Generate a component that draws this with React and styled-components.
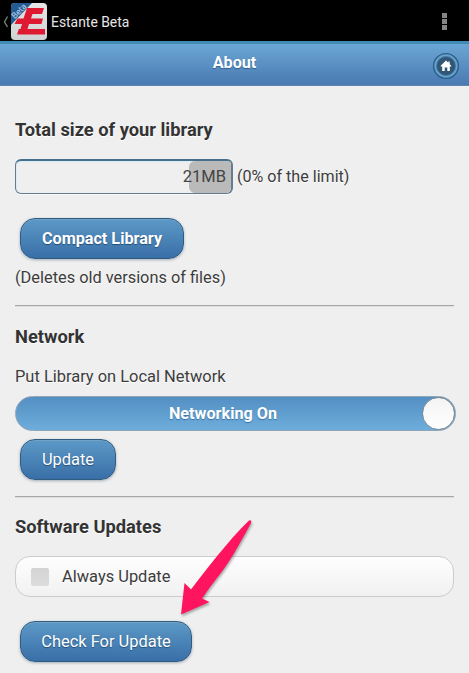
import React from "react";
import styled, { createGlobalStyle } from "styled-components";

const GlobalStyle = createGlobalStyle`
  * { box-sizing: border-box; }
  html, body { margin: 0; padding: 0; background: #efefef; overflow: hidden; }
  body { font-family: Roboto, "Liberation Sans", sans-serif; color: #3c3c3c; }
`;

const Screen = styled.div`
  position: relative;
  width: 469px;
  height: 673px;
  overflow: hidden;
  background: #efefef;
`;

const ActionBar = styled.header`
  display: flex;
  align-items: center;
  height: 41px;
  padding: 0 22px 0 3px;
  background: #000;
`;

const AppTitle = styled.span`
  flex: 1;
  margin-left: 4px;
  padding-top: 3px;
  color: #e6e6e6;
  font-size: 13.9px;
  line-height: 20px;
`;

const Overflow = styled.div`
  display: grid;
  gap: 1px;
  padding-top: 2px;
`;

const Dot = styled.i`
  width: 5px;
  height: 5px;
  background: #858585;
`;

const PageHeader = styled.div`
  display: grid;
  grid-template-columns: 1fr auto 1fr;
  align-items: center;
  height: 45px;
  padding: 3px 9px 0;
  border-top: 3px solid #408cb7;
  border-bottom: 1px solid #5c84ac;
  background: linear-gradient(#6aa7d5, #4a79b1);
`;

const PageTitle = styled.h1`
  grid-column: 2;
  margin: 0;
  padding-bottom: 6px;
  color: #fff;
  font-size: 16.2px;
  font-weight: 700;
  line-height: 20px;
  text-shadow: 0 1px 1px #2e5f8e;
`;

const HomeButton = styled.button`
  justify-self: end;
  display: block;
  width: 28px;
  height: 28px;
  padding: 0;
  border: 0;
  background: none;
`;

const Content = styled.main`
  display: flex;
  flex-direction: column;
  padding: 33px 15px 0 15px;
`;

const SectionTitle = styled.h2`
  margin: 0;
  color: #333;
  font-size: 18.3px;
  font-weight: 700;
  line-height: 22px;
  text-shadow: 0 1px 0 #fff;
`;

const Text = styled.span`
  margin-top: ${(p) => p.$top || "0"};
  font-size: ${(p) => p.$size || "16.45px"};
  line-height: 20px;
  text-shadow: 0 1px 0 #fff;
`;

const UsageRow = styled.div`
  display: flex;
  align-items: center;
  gap: 4px;
  height: 35px;
  margin: 18px 0 24px;
`;

const Meter = styled.div`
  display: flex;
  justify-content: flex-end;
  width: 218px;
  height: 35px;
  overflow: hidden;
  border: 1px solid #667b90;
  border-top: 2px solid #45718f;
  border-right-width: 2px;
  border-radius: 6px;
  background: #efefef;
  box-shadow: inset 1px 1px 1px #d9ebf7, 0 1px 0 #f8f8f8;
`;

const MeterFill = styled.span`
  display: flex;
  justify-content: flex-end;
  width: 42px;
  border-radius: 6px 4px 4px 6px;
  background: #bababa;
`;

const MeterValue = styled.span`
  flex: none;
  padding-right: 5px;
  color: #444;
  font-size: 16.5px;
  line-height: 31px;
`;

const Button = styled.button`
  align-self: flex-start;
  width: ${(p) => p.$width};
  height: 41px;
  margin-left: 5px;
  padding: 0 0 1px;
  border: 1px solid #315c82;
  border-radius: 15px;
  background: linear-gradient(#5c99c7, #396fa7);
  box-shadow: 0 1px 3px rgba(45, 75, 105, 0.4), inset 0 1px 0 #72a3c6;
  color: #fff;
  font-family: inherit;
  font-size: ${(p) => (p.$strong ? "16.2px" : "16.45px")};
  font-weight: ${(p) => (p.$strong ? 700 : 400)};
  text-shadow: 0 1px 1px #244e78;
  white-space: nowrap;
`;

const Divider = styled.hr`
  width: 100%;
  height: 2px;
  margin: ${(p) => p.$margin};
  border: 0;
  border-top: 1px solid #a7a7a7;
  border-bottom: 1px solid #dedede;
`;

const Switch = styled.div`
  display: flex;
  align-items: center;
  width: 441px;
  height: 35px;
  margin: 9px 0 8px;
  border: 1px solid #91a6b5;
  border-radius: 18px;
  background: linear-gradient(#548fc3, #6daddb);
`;

const SwitchLabel = styled.span`
  flex: 1;
  padding: 0 0 1px 8px;
  color: #fff;
  font-size: 16.2px;
  font-weight: 700;
  text-align: center;
  text-shadow: 0 1px 1px #3c719f;
`;

const Thumb = styled.span`
  width: 33px;
  height: 33px;
  border: 1px solid #7c8b95;
  border-radius: 50%;
  background: linear-gradient(#f4f4f4, #fff);
`;

const CheckRow = styled.label`
  display: flex;
  align-items: center;
  gap: 13px;
  height: 41px;
  margin: 18px 0 24px;
  padding-left: 15px;
  border: 1px solid #cccccc;
  border-radius: 15px;
  background: linear-gradient(#fefefe, #f1f1f1);
`;

const Box = styled.span`
  width: 18px;
  height: 18px;
  border-radius: 2px;
  background: linear-gradient(#d3d3d3, #dcdcdc);
`;

const Pointer = styled.svg`
  position: absolute;
  top: 515px;
  left: 175px;
  filter: drop-shadow(1px 2px 1px rgba(60, 60, 60, 0.4));
  pointer-events: none;
`;

const BadgeText = styled.text`
  font: 8.5px Roboto, sans-serif;
  fill: #c2dcf2;
`;

function Logo() {
  return (
    <svg width="44" height="41" viewBox="0 0 44 41">
      <defs>
        <linearGradient id="tile" x2="0" y2="1">
          <stop stopColor="#e6e6e6" />
          <stop offset="1" stopColor="#cfd2d4" />
        </linearGradient>
        <clipPath id="tileClip"><rect x="8" y="3" width="36" height="37" rx="4" /></clipPath>
      </defs>
      <path d="M4.5 16.5 1.5 22 4.5 27" fill="none" stroke="#72846f" strokeWidth="1.4" />
      <g clipPath="url(#tileClip)">
        <rect x="8" y="3" width="36" height="37" fill="url(#tile)" />
        <path d="M24 8H41L39 14H29.5L28 18.5H40L38.5 24H26L24.5 29H42V34.5H14L15.8 29H17.5L19 24H11.5L14.5 18.5H20.5Z" fill="#df1931" />
        <path d="M8 3H29L8 25Z" fill="#245b91" />
        <BadgeText x="12" y="19.2" transform="rotate(-46 12 19.2)">Beta</BadgeText>
      </g>
    </svg>
  );
}

function HomeIcon() {
  return (
    <svg width="28" height="28" viewBox="0 0 28 28">
      <circle cx="14" cy="14" r="12.4" fill="#69a1cb" stroke="#285f8b" strokeWidth="1.4" />
      <circle cx="14" cy="14" r="9.5" fill="#315675" stroke="#447da7" />
      <path d="M14 8.6 8.7 13.8V14.5H10.2V19H12.7V15.5H15.3V19H17.8V14.5H19.3V13.8L17.7 12.2V9.6H16.3V10.8Z" fill="#fff" />
    </svg>
  );
}

export default function App() {
  return (
    <>
      <GlobalStyle />
      <Screen>
        <ActionBar>
          <Logo />
          <AppTitle>Estante Beta</AppTitle>
          <Overflow><Dot /><Dot /><Dot /></Overflow>
        </ActionBar>
        <PageHeader>
          <PageTitle>About</PageTitle>
          <HomeButton aria-label="Home"><HomeIcon /></HomeButton>
        </PageHeader>
        <Content>
          <SectionTitle>Total size of your library</SectionTitle>
          <UsageRow>
            <Meter><MeterFill><MeterValue>21MB</MeterValue></MeterFill></Meter>
            <Text $size="16.1px">(0% of the limit)</Text>
          </UsageRow>
          <Button $strong $width="164px">Compact Library</Button>
          <Text $top="9px" $size="16.35px">(Deletes old versions of files)</Text>
          <Divider $margin="17px 0 19px" />
          <SectionTitle>Network</SectionTitle>
          <Text $top="19px">Put Library on Local Network</Text>
          <Switch role="switch" aria-checked="true">
            <SwitchLabel>Networking On</SwitchLabel>
            <Thumb />
          </Switch>
          <Button $width="96px">Update</Button>
          <Divider $margin="16px 0 18px" />
          <SectionTitle>Software Updates</SectionTitle>
          <CheckRow><Box /><Text>Always Update</Text></CheckRow>
          <Button $width="172px">Check For Update</Button>
        </Content>
        <Pointer width="85" height="105" viewBox="0 0 85 105">
          <path d="M74 5.5Q77 4.5 76 8C64 30 53 50 42 63Q34 73 27 83.5L34.5 87 6 99.5 9.5 68 16 74.5C31 55 52 27 74 5.5Z" fill="#ff145f" />
        </Pointer>
      </Screen>
    </>
  );
}
